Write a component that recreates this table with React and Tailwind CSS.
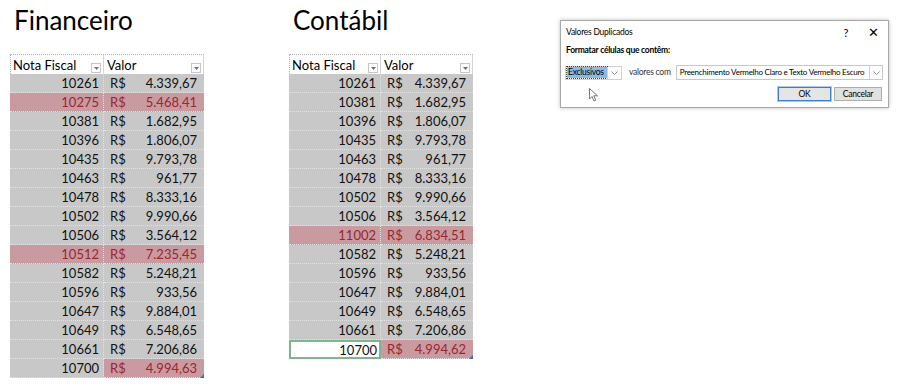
import React from 'react';

const financeiro = [
  ['10261', '4.339,67', ''],
  ['10275', '5.468,41', 'both'],
  ['10381', '1.682,95', ''],
  ['10396', '1.806,07', ''],
  ['10435', '9.793,78', ''],
  ['10463', '961,77', ''],
  ['10478', '8.333,16', ''],
  ['10502', '9.990,66', ''],
  ['10506', '3.564,12', ''],
  ['10512', '7.235,45', 'both'],
  ['10582', '5.248,21', ''],
  ['10596', '933,56', ''],
  ['10647', '9.884,01', ''],
  ['10649', '6.548,65', ''],
  ['10661', '7.206,86', ''],
  ['10700', '4.994,63', 'valor'],
];

const contabil = [
  ['10261', '4.339,67', ''],
  ['10381', '1.682,95', ''],
  ['10396', '1.806,07', ''],
  ['10435', '9.793,78', ''],
  ['10463', '961,77', ''],
  ['10478', '8.333,16', ''],
  ['10502', '9.990,66', ''],
  ['10506', '3.564,12', ''],
  ['11002', '6.834,51', 'both'],
  ['10582', '5.248,21', ''],
  ['10596', '933,56', ''],
  ['10647', '9.884,01', ''],
  ['10649', '6.548,65', ''],
  ['10661', '7.206,86', ''],
  ['10700', '4.994,62', 'selected'],
];

const FilterButton = () => (
  <span className="mb-[1px] flex h-[10px] w-[10px] items-center justify-center border border-[#c6c6c6] bg-white">
    <svg width="5" height="3" viewBox="0 0 5 3">
      <path d="M0 0 L5 0 L2.5 3 Z" fill="#707070" />
    </svg>
  </span>
);

const Chevron = () => (
  <svg width="7" height="4" viewBox="0 0 7 4">
    <path d="M0.5 0.5 L3.5 3.5 L6.5 0.5" stroke="#888" fill="none" />
  </svg>
);

const Sheet = ({ title, rows, notaW, valorW }) => (
  <div className="flex flex-col items-start">
    <h1 className="h-[53px] pl-[4px] pt-[3px] text-[26px] leading-[32px] text-black">
      {title}
    </h1>
    <div className="flex border-t border-l border-dotted border-[#b4b4b4] bg-white text-[13px] leading-[16px]">
      <div
        className="flex h-[19px] items-end justify-between border-r border-[#d4d4d4] pl-[2px] pr-[2px]"
        style={{ width: notaW - 1 }}
      >
        <span className="self-center">Nota Fiscal</span>
        <FilterButton />
      </div>
      <div
        className="flex h-[19px] items-end justify-between border-r border-[#d4d4d4] pl-[3px] pr-[2px]"
        style={{ width: valorW }}
      >
        <span className="self-center">Valor</span>
        <FilterButton />
      </div>
    </div>
    <div className="relative text-[13px] leading-[16px]">
      {rows.map(([nota, valor, mark]) => {
        const pinkNota = mark === 'both';
        const pinkValor = mark === 'both' || mark === 'valor' || mark === 'selected';
        return (
          <div key={nota} className="flex h-[19px]">
            {mark === 'selected' ? (
              <div
                className="flex items-center justify-end border-2 border-[#7fb491] bg-white pr-[2px] text-[#111]"
                style={{ width: notaW }}
              >
                {nota}
              </div>
            ) : (
              <div
                className={`flex items-center justify-end border-b border-r border-dotted border-[#e2e2e2] pr-[4px] ${
                  pinkNota ? 'bg-[#c99aa0] text-[#9a2630]' : 'bg-[#c8c8c8] text-[#111]'
                }`}
                style={{ width: notaW }}
              >
                {nota}
              </div>
            )}
            <div
              className={`flex items-center justify-between border-b border-dotted border-[#e2e2e2] pl-[6px] pr-[7px] ${
                pinkValor ? 'bg-[#c99aa0] text-[#9a2630]' : 'bg-[#c8c8c8] text-[#111]'
              }`}
              style={{ width: valorW }}
            >
              <span>R$</span>
              <span>{valor}</span>
            </div>
          </div>
        );
      })}
      <span className="absolute bottom-0 right-0 h-0 w-0 border-b-[4px] border-l-[4px] border-b-[#3b6ea8] border-l-transparent" />
    </div>
  </div>
);

const Dialog = () => (
  <div className="mt-[20px] h-[88px] w-[329px] border border-[#a8a8a8] bg-white text-[8.5px] leading-[11px] tracking-[-0.25px] text-black shadow-[0_0_4px_rgba(0,0,0,0.25)]">
    <div className="flex h-[22px] items-center justify-between pl-[5px] pr-[9px]">
      <span>Valores Duplicados</span>
      <div className="flex items-center gap-[20px] text-[11px]">
        <span>?</span>
        <span className="text-[13px] font-light">✕</span>
      </div>
    </div>
    <div className="pl-[5px] pt-[2px] font-bold">Formatar células que contêm:</div>
    <div className="mt-[9px] flex items-center pl-[4px] pr-[5px]">
      <div className="flex h-[14px] w-[57px] shrink-0 items-center border border-[#d0d0d0]">
        <span className="ml-[1px] flex h-[11px] w-[40px] items-center bg-[#8db7e6] px-[1px] outline-1 outline-dotted outline-[#444]">
          Exclusivos
        </span>
        <span className="ml-auto flex h-[12px] w-[14px] items-center justify-center border-l border-[#d0d0d0]">
          <Chevron />
        </span>
      </div>
      <span className="ml-[7px] shrink-0 whitespace-nowrap text-[#333]">valores com</span>
      <div className="ml-[5px] flex h-[15px] min-w-0 flex-1 items-center border border-[#c8c8c8]">
        <span className="min-w-0 flex-1 overflow-hidden whitespace-nowrap pl-[3px] text-[8px] tracking-[-0.25px]">
          Preenchimento Vermelho Claro e Texto Vermelho Escuro
        </span>
        <span className="flex h-[13px] w-[13px] shrink-0 items-center justify-center border-l border-[#d0d0d0]">
          <Chevron />
        </span>
      </div>
    </div>
    <div className="mt-[6px] flex items-center pr-[6px]">
      <svg className="ml-[28px] mt-[2px]" width="10" height="14" viewBox="0 0 10 14">
        <path d="M0.5 0.5 L0.5 11 L3 8.5 L5 13 L6.8 12.2 L4.8 7.8 L8.5 7.8 Z" fill="#fff" stroke="#555" strokeWidth="0.8" />
      </svg>
      <div className="ml-auto flex gap-[3px]">
        <button className="flex h-[14px] w-[53px] items-center justify-center border border-[#3c7fd0] bg-[#e5e5e5] outline-1 outline-[#a8c8ee]">
          OK
        </button>
        <button className="flex h-[14px] w-[48px] items-center justify-center border border-[#adadad] bg-[#e1e1e1]">
          Cancelar
        </button>
      </div>
    </div>
  </div>
);

export default function App() {
  return (
    <div
      className="flex h-[386px] w-[900px] bg-white pl-[10px]"
      style={{ fontFamily: 'Lato, "Open Sans", sans-serif' }}
    >
      <div className="w-[279px] pt-[1px]">
        <Sheet title="Financeiro" rows={financeiro} notaW={94} valorW={100} />
      </div>
      <div className="w-[271px] pt-[1px]">
        <Sheet title="Contábil" rows={contabil} notaW={92} valorW={92} />
      </div>
      <div>
        <Dialog />
      </div>
    </div>
  );
}
